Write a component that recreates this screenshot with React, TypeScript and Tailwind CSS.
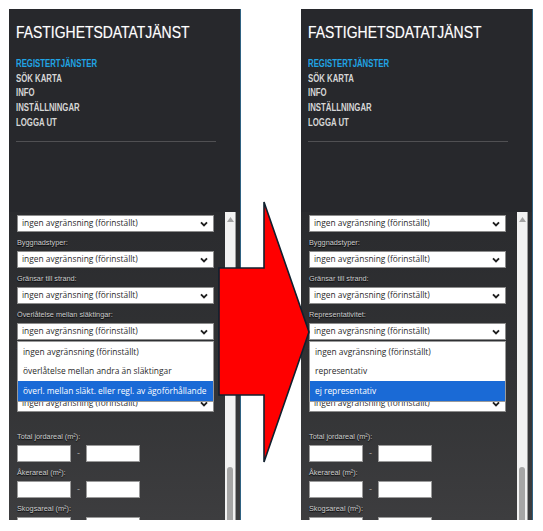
import React from "react";

const Chevron = () => (
  <svg width="8" height="6" viewBox="0 0 8 6" className="shrink-0">
    <path d="M1 1.3 L4 4.3 L7 1.3" stroke="#1e1e1e" strokeWidth="1.9" fill="none" />
  </svg>
);

function Select({ text }: { text: string }) {
  return (
    <div className="h-[17px] w-[197px] shrink-0 bg-white border border-[#8c8c8c] flex items-center justify-between pl-[4px] pr-[5px] text-[8.4px] text-[#2a2a2a] [font-family:'Open_Sans',sans-serif]">
      <span className="whitespace-nowrap">{text}</span>
      <Chevron />
    </div>
  );
}

function Label({ text }: { text: string }) {
  return (
    <div className="h-[19px] shrink-0 pt-[6px] leading-[10px] text-[7.3px] text-[#cdcdcd] whitespace-nowrap [font-family:'Liberation_Sans',Arial,sans-serif] [text-shadow:0_1px_1px_#000]">
      {text}
    </div>
  );
}

function Input() {
  return <div className="h-[17px] w-[54px] shrink-0 bg-white border border-[#9a9a9a]" />;
}

function Range() {
  return (
    <div className="flex items-center h-[17px] shrink-0">
      <Input />
      <span className="w-[15px] text-center text-[9px] text-[#a8a8a8] [font-family:'Liberation_Sans',Arial,sans-serif]">-</span>
      <Input />
    </div>
  );
}

const DEF = "ingen avgränsning (förinställt)";

function Panel({ label4, options }: { label4: string; options: string[] }) {
  return (
    <div className="relative w-[232px] h-[511px] shrink-0 bg-[#27282c] border-r border-[#2f6282] flex flex-col overflow-hidden">
      <div className="pl-[7px] pt-[14px]">
        <div className="text-[17px] leading-[20px] text-white whitespace-nowrap origin-left scale-x-[0.82] [font-family:'Liberation_Sans',sans-serif] [text-shadow:0_0_1px_rgba(255,255,255,0.4)]">
          FASTIGHETSDATATJÄNST
        </div>
        <div className="mt-[14px] text-[10px] font-bold leading-[14.7px] text-[#d6d6d6] origin-left scale-x-[0.78] [font-family:'Liberation_Sans',sans-serif]">
          <div className="text-[#20a4e4]">REGISTERTJÄNSTER</div>
          <div>SÖK KARTA</div>
          <div>INFO</div>
          <div>INSTÄLLNINGAR</div>
          <div>LOGGA UT</div>
        </div>
        <div className="mt-[10.5px] h-px w-[200px] bg-[#505053]" />
      </div>

      <div className="mt-auto h-[308px] flex relative bg-linear-to-b from-[#2a2b2e] via-[#313234] to-[#3d3d3f]">
        <div className="flex-1 pl-[8px] pt-[3px] flex flex-col">
          <Select text={DEF} />
          <Label text="Byggnadstyper:" />
          <Select text={DEF} />
          <Label text="Gränsar till strand:" />
          <Select text={DEF} />
          <Label text={label4} />
          <Select text={DEF} />
          <Label text="Taxeringsenhet:" />
          <Select text={DEF} />
          <Label text="Bebyggelse:" />
          <Select text={DEF} />
          <div className="h-[14px] shrink-0" />
          <Label text="Total jordareal (m²):" />
          <Range />
          <Label text="Åkerareal (m²):" />
          <Range />
          <Label text="Skogsareal (m²):" />
          <Range />
        </div>

        <div className="w-[11px] mr-[4px] h-full bg-[#f2f2f2] border-r border-[#9c9c9c] flex flex-col items-center">
          <svg width="7" height="5" viewBox="0 0 7 5" className="mt-[5px]">
            <path d="M0 5 L3.5 0 L7 5 Z" fill="#a3a3a3" />
          </svg>
          <div className="mt-auto w-[6px] h-[53px] rounded-t-full bg-[#a6a6a6]" />
        </div>

        <div className="absolute left-[8px] top-[129px] w-[197px] h-[61px] bg-white border border-[#9a9a9a] text-[8.4px] text-[#2a2a2a] [font-family:'Open_Sans',sans-serif] flex flex-col">
          {options.map((o, i) => (
            <div
              key={i}
              className={
                "h-[20px] flex items-center pl-[5px] whitespace-nowrap " +
                (i === options.length - 1 ? "bg-[#1a6ad6] text-white" : "")
              }
            >
              {o}
            </div>
          ))}
        </div>
      </div>
    </div>
  );
}

export default function App() {
  return (
    <div className="relative w-[543px] h-[531px] bg-white overflow-hidden">
      <div className="flex gap-[60px] pl-[9px] pt-[9px]">
        <Panel
          label4="Överlåtelse mellan släktingar:"
          options={[DEF, "överlåtelse mellan andra än släktingar", "överl. mellan släkt. eller regl. av ägoförhållande"]}
        />
        <Panel label4="Representativitet:" options={[DEF, "representativ", "ej representativ"]} />
      </div>
      <svg className="absolute left-0 top-0 pointer-events-none" width="543" height="531" viewBox="0 0 543 531">
        <polygon
          points="219,268 264,268 264,202 309,332 264,462 264,395 219,395"
          fill="#ff0000"
          stroke="#10202e"
          strokeWidth="1.6"
          strokeLinejoin="miter"
        />
      </svg>
    </div>
  );
}
